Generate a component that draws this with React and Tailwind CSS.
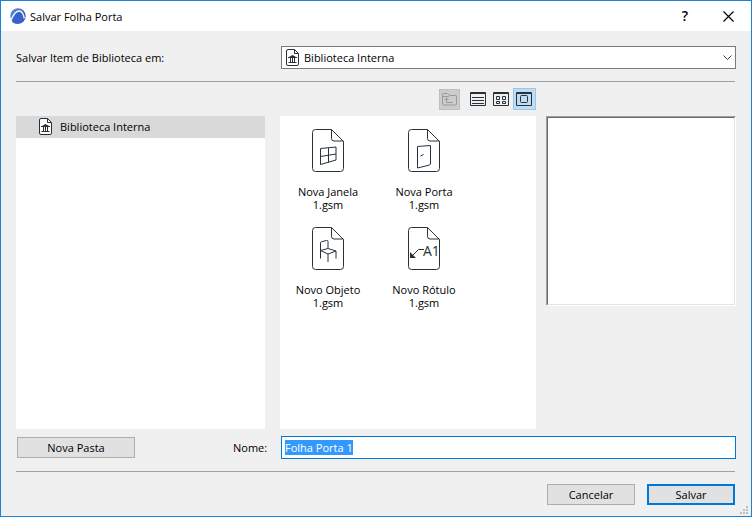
import { useEffect, useRef, useState } from 'react';

const items = [
  { name: 'Nova Janela', file: '1.gsm', kind: 'window' },
  { name: 'Nova Porta', file: '1.gsm', kind: 'door' },
  { name: 'Novo Objeto', file: '1.gsm', kind: 'chair' },
  { name: 'Novo Rótulo', file: '1.gsm', kind: 'label' },
];

const Logo = () => (
  <svg width="16" height="16" viewBox="0 0 16 16" className="shrink-0">
    <defs>
      <linearGradient id="logo" x1="0" y1="0" x2="1" y2="1">
        <stop offset="0" stopColor="#5f8fe6" />
        <stop offset="1" stopColor="#1f3f9c" />
      </linearGradient>
    </defs>
    <circle cx="8" cy="8" r="7.7" fill="url(#logo)" />
    <path d="M2.200 14C4 8.500 6.500 4.500 9.500 4.500c2.500 0 3.700 4 4.200 7.500-2 4-8 5-11.500 2z" fill="#3762cc" />
    <path d="M.8 12.500C3 7 6 3 9.300 3c2.700 0 4.200 3.500 5 7.500" fill="none" stroke="#eef4ff" strokeWidth="1.400" />
  </svg>
);

const LibraryIcon = ({ className }) => (
  <svg width="13" height="17" viewBox="0 0 13 17" fill="none" stroke="#263238" className={className}>
    <path d="M2 .5h6.500l4 4V15a1.500 1.500 0 0 1-1.500 1.500H2A1.500 1.500 0 0 1 .5 15V2A1.500 1.500 0 0 1 2 .5z" fill="#fff" />
    <path d="M8.500.5v4h4" />
    <path d="M2 8.500h9M2.500 13.500h8M4.500 9v4M6.500 9v4M8.500 9v4" />
    <path d="M3 8l3.500-2L10 8z" fill="#263238" stroke="none" />
  </svg>
);

const drawings = {
  window: <path d="M8.500 19.500l15.500-1.500v13l-15.500 4.500zM16.500 19v14.500M8.500 27.500L24 25" />,
  door: <path d="M9.500 17.500l13-1v18.500l-1 1-12 3zM12.500 27l3-1.500" />,
  chair: (
    <path d="M8.500 31.500V16q0-1 1-1.300l5-1.200q1.500-.3 1.500 1v6.500M8.500 23.500l7.500-2 8 2.500-8 3zM16 27v8M24 24v7.500" />
  ),
  label: (
    <>
      <path d="M5 28l5.500-5.500H16" />
      <path d="M2 25v6h6z" fill="#263238" stroke="none" />
      <text x="15" y="29" fontSize="14" fontWeight="400" fill="#263238" stroke="none" className="font-['Open_Sans',sans-serif]">
        A1
      </text>
    </>
  ),
};

const FileIcon = ({ kind }) => (
  <svg width="32" height="43" viewBox="0 0 32 43" fill="none" stroke="#263238">
    <path d="M3.500.5h16l12 12v27a3 3 0 0 1-3 3h-25a3 3 0 0 1-3-3v-36a3 3 0 0 1 3-3z" />
    <path d="M19.500.5v9a2.500 2.500 0 0 0 2.500 2.500h9.500" />
    {drawings[kind]}
  </svg>
);

const viewModes = [
  { id: 'list', label: 'Lista', drawing: <path d="M2 5.500h12M2 8.500h12M2 11.500h12" /> },
  { id: 'grid', label: 'Grade', drawing: <path d="M3.500 4.500h3v3h-3zM9.500 4.500h3v3h-3zM3.500 9.500h3v2h-3zM9.500 9.500h3v2h-3z" /> },
  { id: 'large', label: 'Ícones grandes', drawing: <rect x="4.500" y="3.500" width="7" height="7" rx="1" /> },
];

const App = () => {
  const [name, setName] = useState('Folha Porta 1');
  const [view, setView] = useState('large');
  const nameRef = useRef(null);

  useEffect(() => {
    nameRef.current.focus();
    nameRef.current.select();
  }, []);

  return (
    <div className="flex min-h-screen flex-col border border-[#1883d7] bg-[#f0f0f0] font-['Open_Sans',sans-serif] text-[11px] leading-[13px] text-black">
      <header className="flex h-[30px] items-center bg-white pl-[9px] pr-[17px]">
        <Logo />
        <h1 className="ml-1 flex-1">Salvar Folha Porta</h1>
        <button type="button" aria-label="Ajuda" className="w-4 text-[14px] leading-4 font-semibold">?</button>
        <button type="button" aria-label="Fechar" className="ml-[30px]">
          <svg width="11" height="11" viewBox="0 0 11 11" stroke="#000" strokeWidth="1.200">
            <path d="M.5.5l10 10M10.500.5l-10 10" />
          </svg>
        </button>
      </header>

      <main className="relative flex flex-1 flex-col px-[15px] pt-[15px] pb-[11px]">
        <div className="flex items-center">
          <label htmlFor="folder" className="w-[265px]">Salvar Item de Biblioteca em:</label>
          <div className="relative flex-1">
            <select id="folder" className="block h-[23px] w-full appearance-none border border-[#7a7a7a] bg-white pl-[22px]">
              <option>Biblioteca Interna</option>
            </select>
            <LibraryIcon className="pointer-events-none absolute top-[3px] left-[5px]" />
            <svg width="9" height="6" viewBox="0 0 9 6" fill="none" stroke="#444" className="pointer-events-none absolute top-[9px] right-[4px]">
              <path d="M.5.5l4 4 4-4" />
            </svg>
          </div>
        </div>

        <hr className="mt-3 mr-px border-[#a0a0a0]" />

        <div className="mt-[6px] flex flex-1 items-stretch">
          <ul className="mt-[28px] w-[249px] bg-white">
            <li className="flex h-[22px] items-center bg-[#d9d9d9] pb-px pl-[23px]">
              <LibraryIcon />
              <span className="ml-2">Biblioteca Interna</span>
            </li>
          </ul>

          <section className="ml-[15px] flex flex-1 flex-col">
            <div className="flex h-[22px] items-end justify-end">
              <button type="button" aria-label="Pasta acima" disabled className="mr-[7px] flex size-[21px] items-center justify-center border border-[#bfbfbf] bg-[#cccccc]">
                <svg width="15" height="13" viewBox="0 0 15 13" fill="none" stroke="#999">
                  <path d="M.5 11V1.500a1 1 0 0 1 1-1h4l2 2h6a1 1 0 0 1 1 1V11a1 1 0 0 1-1 1h-12a1 1 0 0 1-1-1z" />
                  <path d="M.5 3.500h6l1-1M10.500 9.500h-6V5M2.500 7l2-2 2 2" />
                </svg>
              </button>
              {viewModes.map((mode) => (
                <button
                  key={mode.id}
                  type="button"
                  aria-label={mode.label}
                  onClick={() => setView(mode.id)}
                  className={
                    'flex h-[22px] w-[23px] items-center border pl-[2px] ' +
                    (view === mode.id ? 'border-[#90c8f6] bg-[#c0dcf3]' : 'border-transparent')
                  }
                >
                  <svg width="16" height="14" viewBox="0 0 16 14" fill="none" stroke="#263238">
                    <path d="M.5.5h15v13H.5zM0 1.500h16" />
                    {mode.drawing}
                  </svg>
                </button>
              ))}
            </div>
            <ul className="mt-[6px] flex flex-1 flex-wrap content-start bg-white pr-16">
              {items.map((item) => (
                <li key={item.name} className="flex h-[98px] w-24 flex-col items-center pt-[13px] text-center">
                  <FileIcon kind={item.kind} />
                  <p className="mt-[13px]">
                    {item.name}
                    <br />
                    {item.file}
                  </p>
                </li>
              ))}
            </ul>
          </section>

          <div className="mt-[28px] ml-[10px] h-[190px] w-[190px] border border-t-[#a0a0a0] border-r-white border-b-white border-l-[#a0a0a0]">
            <div className="h-full border border-t-[#696969] border-r-[#e3e3e3] border-b-[#e3e3e3] border-l-[#696969] bg-white" />
          </div>
        </div>

        <div className="mt-[7px] flex items-center">
          <button type="button" className="ml-px h-[21px] w-[118px] border border-[#adadad] bg-[#e1e1e1]">Nova Pasta</button>
          <label htmlFor="name" className="ml-[98px] w-12">Nome:</label>
          <input
            id="name"
            ref={nameRef}
            value={name}
            onChange={(e) => setName(e.target.value)}
            className="h-[23px] min-w-0 flex-1 border border-[#0078d7] bg-white px-[3px] outline-none selection:bg-[#3399ff] selection:text-white"
          />
        </div>

        <hr className="mt-3 mr-px border-[#a0a0a0]" />

        <footer className="mt-3 mr-px flex justify-end gap-3">
          <button type="button" className="h-[21px] w-[88px] border border-[#adadad] bg-[#e1e1e1]">Cancelar</button>
          <button type="submit" className="h-[21px] w-[88px] border-2 border-[#0078d7] bg-[#e1e1e1]">Salvar</button>
        </footer>

        <svg width="8" height="8" viewBox="0 0 8 8" fill="#bfbfbf" className="absolute right-[3px] bottom-[2px]">
          <path d="M6 0h2v2H6zM3 3h2v2H3zM6 3h2v2H6zM0 6h2v2H0zM3 6h2v2H3zM6 6h2v2H6z" />
        </svg>
      </main>
    </div>
  );
};

export default App;
